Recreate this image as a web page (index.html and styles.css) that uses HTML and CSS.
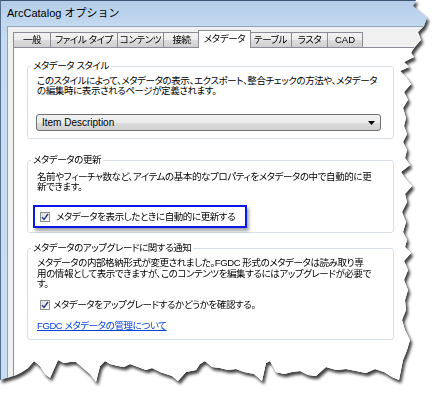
FILE: index.html
```html
<!DOCTYPE html>
<html lang="ja">
<head>
<meta charset="utf-8">
<title>ArcCatalog オプション</title>
<link rel="stylesheet" href="styles.css">
</head>
<body>
<div class="stage">
  <div class="window">
    <div class="titlebar">ArcCatalog オプション</div>
    <div class="client">
      <div class="tabs">
        <div class="tab t1">一般</div>
        <div class="tab t2">ファイル タイプ</div>
        <div class="tab t3">コンテンツ</div>
        <div class="tab t4">接続</div>
        <div class="tab active t5">メタデータ</div>
        <div class="tab t6">テーブル</div>
        <div class="tab t7">ラスタ</div>
        <div class="tab t8">CAD</div>
      </div>
      <div class="panel">
        <fieldset class="group g1">
          <legend>メタデータ スタイル</legend>
          <p class="desc">このスタイルによって、メタデータの表示、エクスポート、整合チェックの方法や、メタデータ<br>の編集時に表示されるページが定義されます。</p>
          <div class="select">
            <span class="value">Item Description</span>
            <svg class="arrow" width="7" height="4" viewBox="0 0 7 4"><path d="M0 0h7L3.5 4z" fill="#000"/></svg>
          </div>
        </fieldset>
        <fieldset class="group g2">
          <legend>メタデータの更新</legend>
          <p class="desc">名前やフィーチャ数など、アイテムの基本的なプロパティをメタデータの中で自動的に更<br>新できます。</p>
          <div class="highlight">
            <label class="check">
              <span class="box"><svg width="8" height="8" viewBox="0 0 8 8"><path d="M1 4.2l2 2.2L7 1" fill="none" stroke="#2a3f8f" stroke-width="1.5"/></svg></span>
              <span>メタデータを表示したときに自動的に更新する</span>
            </label>
          </div>
        </fieldset>
        <fieldset class="group g3">
          <legend>メタデータのアップグレードに関する通知</legend>
          <p class="desc">メタデータの内部格納形式が変更されました。FGDC 形式のメタデータは読み取り専<br>用の情報として表示できますが、このコンテンツを編集するにはアップグレードが必要で<br>す。</p>
          <label class="check c3">
            <span class="box"><svg width="8" height="8" viewBox="0 0 8 8"><path d="M1 4.2l2 2.2L7 1" fill="none" stroke="#2a3f8f" stroke-width="1.5"/></svg></span>
            <span>メタデータをアップグレードするかどうかを確認する。</span>
          </label>
          <a class="link" href="#">FGDC メタデータの管理について</a>
        </fieldset>
      </div>
    </div>
  </div>
</div>
</body>
</html>
```

FILE: styles.css
```css
* { box-sizing: border-box; }
html, body { margin: 0; padding: 0; background: #fff; }
body {
  font-family: "Liberation Sans", "Noto Sans CJK JP", sans-serif;
  font-size: 10px;
  color: #000;
  width: 440px;
  height: 404px;
  overflow: hidden;
}
.stage {
  width: 440px;
  height: 404px;
  filter: drop-shadow(2px 3px 1.5px rgba(0, 0, 0, 0.75));
}
.window {
  width: 440px;
  height: 404px;
  background: linear-gradient(#b7cfe9, #c6dbf1 40px, #c9ddf2);
  border-top: 1px solid #3c5674;
  border-left: 1px solid #55708f;
  clip-path: polygon(0 0, 416px 0, 413px 6px, 420px 12px, 427px 18px, 424px 26px, 418px 32px, 421px 40px, 414px 48px, 411px 53px, 414px 57px, 404px 62px, 409px 67px, 400px 71px, 406px 77px, 411px 84px, 404px 92px, 408px 100px, 403px 108px, 406px 118px, 404px 126px, 407px 134px, 403px 142px, 407px 150px, 405px 158px, 410px 165px, 401px 172px, 405px 178px, 412px 186px, 405px 194px, 407px 202px, 402px 212px, 406px 222px, 403px 232px, 407px 240px, 405px 247px, 411px 253px, 404px 261px, 408px 270px, 404px 280px, 408px 290px, 405px 300px, 406px 310px, 402px 320px, 405px 330px, 410px 340px, 407px 350px, 403px 360px, 401px 370px, 399px 380px, 392px 377px, 384px 372px, 375px 369px, 366px 373px, 356px 371px, 346px 369px, 336px 370px, 326px 367px, 316px 376px, 308px 375px, 300px 371px, 292px 372px, 284px 374px, 276px 372px, 270px 361px, 266px 363px, 262px 381px, 254px 374px, 244px 372px, 236px 369px, 228px 370px, 220px 368px, 212px 367px, 205px 361px, 200px 364px, 196px 370px, 186px 372px, 178px 381px, 172px 376px, 166px 374px, 160px 372px, 152px 368px, 146px 370px, 138px 367px, 130px 364px, 124px 367px, 118px 366px, 110px 364px, 105px 361px, 100px 366px, 96px 382px, 90px 374px, 84px 369px, 76px 362px, 70px 362px, 64px 363px, 58px 360px, 54px 369px, 50px 378px, 45px 374px, 40px 366px, 34px 361px, 28px 368px, 22px 372px, 16px 375px, 10px 377px, 4px 379px, 0 380px);
}
.titlebar {
  height: 25px;
  padding-left: 6px;
  line-height: 25px;
  font-size: 11px;
  color: #000;
  background: linear-gradient(#b4cde8, #c3d9f0);
}
.client {
  margin-left: 6px;
  height: 380px;
  background: #f0f0f0;
  border-top: 1px solid #8ea4ba;
  border-left: 1px solid #8ea4ba;
  padding: 3px 0 0 5px;
  font-feature-settings: "palt";
  font-size: 9.5px;
  letter-spacing: -0.4px;
}
.tabs {
  display: flex;
  align-items: flex-end;
  height: 17px;
  position: relative;
  z-index: 1;
}
.tab {
  height: 15px;
  line-height: 14px;
  text-align: center;
  white-space: nowrap;
  border: 1px solid #898c95;
  border-bottom: none;
  margin-right: -1px;
  background: linear-gradient(#f3f3f3, #ebebeb 50%, #dddddd 51%, #cfcfcf);
}
.t1 { width: 38px; }
.t2 { width: 68px; }
.t3 { width: 47px; }
.t4 { width: 37px; }
.t5 { width: 53px; }
.t6 { width: 43px; }
.t7 { width: 37px; }
.t8 { width: 36px; letter-spacing: 0; }
.tab.active {
  height: 18px;
  line-height: 15px;
  background: #fff;
  margin-bottom: -1px;
  margin-left: -1px;
  margin-right: -2px;
  position: relative;
  z-index: 2;
}
.panel {
  background: #fff;
  border: 1px solid #898c95;
  height: 360px;
  padding: 12px 0 0 13px;
}
.group {
  width: 367px;
  margin: 0;
  border: 1px solid #d5dfe5;
  border-radius: 3px;
  padding: 0 0 0 9px;
}
.group legend {
  padding: 0 2px;
  margin-left: -6px;
  line-height: 12px;
  color: #000;
}
.desc {
  margin: 0;
  line-height: 10px;
  white-space: nowrap;
}
.g1 { padding-top: 4px; padding-bottom: 7px; }
.g1 .desc { margin-bottom: 18px; }
.select {
  width: 345px;
  height: 17px;
  margin-left: -1px;
  border: 1px solid #707070;
  border-radius: 3px;
  background: linear-gradient(#f2f2f2, #ebebeb 50%, #dddddd 51%, #cfcfcf);
  display: flex;
  align-items: center;
  justify-content: space-between;
  padding: 0 5px 0 5px;
  font-size: 10px;
  letter-spacing: 0;
}
.g2 { margin-top: 15px; padding-top: 6px; padding-bottom: 4px; }
.highlight {
  margin-top: 13px;
  margin-left: -4px;
  width: 214px;
  height: 23px;
  border: 2px solid #0b17e6;
  box-shadow: 2px 3px 3px rgba(0, 0, 0, 0.35);
  display: flex;
  align-items: center;
  padding-left: 5px;
}
.check {
  display: flex;
  align-items: center;
  gap: 6px;
  white-space: nowrap;
  line-height: 12px;
}
.box {
  width: 10px;
  height: 10px;
  border: 1px solid #8e8f8f;
  background: linear-gradient(135deg, #dcdcdc, #fbfbfb);
  display: flex;
  align-items: center;
  justify-content: center;
}
.box svg { display: block; }
.g3 { margin-top: 9px; padding-top: 4px; padding-bottom: 7px; }
.g3 .desc { line-height: 10.5px; }
.c3 { margin-top: 9px; margin-left: 3px; gap: 3px; }
.link {
  display: inline-block;
  margin-top: 9px;
  line-height: 12px;
  color: #0645d6;
  text-decoration: underline;
}
```
